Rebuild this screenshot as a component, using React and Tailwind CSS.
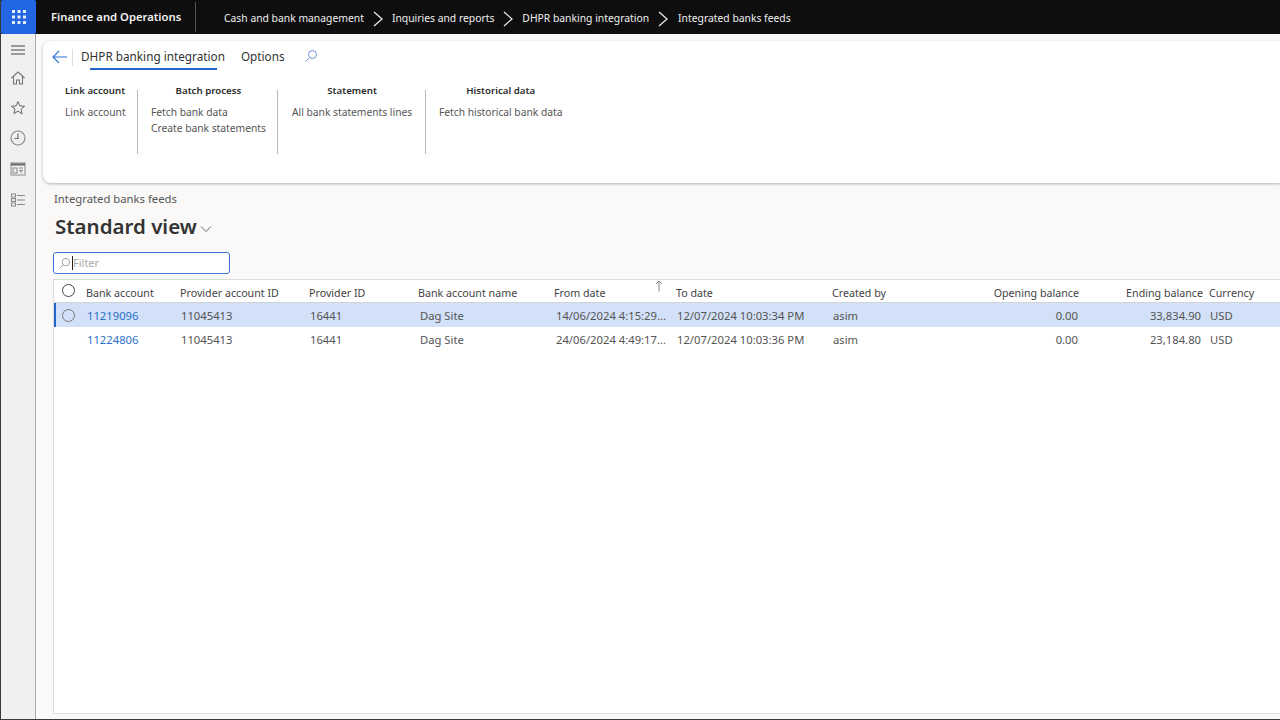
import React from "react";

const crumbs = ["Cash and bank management", "Inquiries and reports", "DHPR banking integration", "Integrated banks feeds"];
const cols = "grid-cols-[32px_94px_129px_109px_136px_122px_156px_120px_127px_124px_77px]";
const rows = [
  { sel: true, acc: "11219096", from: "14/06/2024 4:15:29...", to: "12/07/2024 10:03:34 PM", end: "33,834.90" },
  { sel: false, acc: "11224806", from: "24/06/2024 4:49:17...", to: "12/07/2024 10:03:36 PM", end: "23,184.80" },
];

function Chevron() {
  return (
    <svg width="12" height="16" viewBox="0 0 12 16" fill="none" stroke="#e8e8e8" strokeWidth="1.3" className="shrink-0">
      <path d="M2 1l8 7-8 7" />
    </svg>
  );
}

function RibbonGroup({ title, items, w, center, last, titleSize }) {
  return (
    <div className={`flex justify-between ${w}`}>
      <div className="w-fit flex flex-col">
        <div className={`${titleSize || "text-[10px]"} leading-[14px] font-semibold text-[#2b2b2b] whitespace-nowrap ${center ? "text-center" : ""}`}>{title}</div>
        <div className="mt-[7px] flex flex-col gap-[2px]">
          {items.map((t) => (
            <div key={t} className="text-[10.25px] leading-[14px] text-[#555] whitespace-nowrap">{t}</div>
          ))}
        </div>
      </div>
      {last ? null : <div className="w-px h-[64px] mt-[6px] bg-[#b9b9b9] shrink-0" />}
    </div>
  );
}

function Radio({ dim }) {
  return <div className={`w-[13px] h-[13px] rounded-full border ${dim ? "border-[#777] border-[1.5px]" : "border-[#444]"}`} />;
}

export default function App() {
  return (
    <div className="w-[1280px] h-[720px] overflow-hidden flex flex-col bg-[#faf9f8] border-l border-b border-[#3a3a3a] font-['Noto_Sans','Open_Sans',sans-serif]">
      <header className="h-[34px] shrink-0 bg-[#0e0e0e] flex items-center">
        <div className="w-[35px] h-[34px] bg-[#2266e3] rounded-[2px] flex items-center justify-center">
          <svg width="16" height="16" viewBox="0 0 16 16" fill="#e8eefc">
            {[1, 6.5, 12].flatMap((y) => [1, 6.5, 12].map((x) => <rect key={x + "-" + y} x={x} y={y} width="3" height="3" />))}
          </svg>
        </div>
        <div className="ml-[15px] w-[144px] text-[11.25px] font-semibold text-[#f2f2f2] whitespace-nowrap">Finance and Operations</div>
        <div className="w-px h-[30px] bg-[#555]" />
        <div className="ml-[28px] mt-[3px] flex items-center text-[10.35px] text-[#eeeeee] whitespace-nowrap">
          <span>{crumbs[0]}</span>
          <span className="mx-[8px]"><Chevron /></span>
          <span>{crumbs[1]}</span>
          <span className="mx-[8px]"><Chevron /></span>
          <span>{crumbs[2]}</span>
          <span className="mx-[8px]"><Chevron /></span>
          <span className="pl-[1px]">{crumbs[3]}</span>
        </div>
      </header>

      <div className="flex flex-1 min-h-0">
        <aside className="w-[35px] shrink-0 bg-[#f1f0ef] border-r border-[#a8a8a8] flex flex-col items-center pt-[8px] gap-[10px]">
          <svg width="16" height="16" viewBox="0 0 16 16" fill="none" stroke="#444" strokeWidth="1.1"><path d="M1 4h14M1 8h14M1 12h14" /></svg>
          <svg className="mt-[2px]" width="16" height="16" viewBox="0 0 16 16" fill="none" stroke="#777" strokeWidth="1.1"><path d="M1.5 8L8 2l6.500 6M3.500 6.500V14h3v-4h3v4h3V6.500" /></svg>
          <svg className="mt-[4px]" width="16" height="16" viewBox="0 0 16 16" fill="none" stroke="#666" strokeWidth="1"><path d="M8 1.500l1.900 4.400 4.700.4-3.600 3.100 1.100 4.700L8 11.100l-4.100 2.500L5 8.900 1.400 6.300l4.700-.4z" /></svg>
          <svg className="mt-[4px]" width="16" height="16" viewBox="0 0 16 16" fill="none" stroke="#888" strokeWidth="1.1"><circle cx="8" cy="8" r="7" /><path d="M8 3.500V8.500H4.500" stroke="#666" /></svg>
          <svg className="mt-[5px]" width="16" height="16" viewBox="0 0 16 16" fill="none" stroke="#888" strokeWidth="1"><rect x="1" y="2" width="14" height="12" /><path d="M1 3.500h14" strokeWidth="2" stroke="#666" /><rect x="3" y="7" width="4" height="5" /><path d="M9 7h4M9 9.500h4M11 9.500V12" /></svg>
          <svg className="mt-[5px]" width="16" height="16" viewBox="0 0 16 16" fill="none" stroke="#888" strokeWidth="1"><rect x="1.500" y="2" width="4" height="3" /><rect x="1.500" y="6.500" width="4" height="3" /><rect x="1.500" y="11" width="4" height="3" /><path d="M7 3.500h8M7 8h8M7 12.500h8" /></svg>
        </aside>

        <main className="flex-1 min-w-0 pl-[7px] pt-[7px] flex flex-col">
          <section className="h-[142px] shrink-0 bg-white rounded-l-[8px] shadow-[0_1px_3px_rgba(0,0,0,0.28)] pt-[3px]">
            <div className="flex items-center h-[26px] pl-[9px]">
              <svg width="16" height="14" viewBox="0 0 16 14" fill="none" stroke="#2f6fd6" strokeWidth="1.100"><path d="M15 7H1M7 1L1 7l6 6" /></svg>
              <div className="ml-[4px] w-px h-[17px] bg-[#dddddd]" />
              <div className="relative ml-[8px] text-[11.75px] text-[#333] whitespace-nowrap">
                DHPR banking integration
                <div className="absolute left-[9px] right-[8px] -bottom-[4px] h-[2px] bg-[#2266c8]" />
              </div>
              <div className="ml-[16px] text-[11.75px] text-[#333]">Options</div>
              <svg className="ml-[19px] -mt-[3px]" width="14" height="14" viewBox="0 0 14 14" fill="none" stroke="#6f94e0" strokeWidth="1"><circle cx="8.500" cy="5.500" r="4" /><path d="M5.500 8.500L1.500 12.500" /></svg>
            </div>
            <div className="flex mt-[14px] pl-[22px]">
              <RibbonGroup title="Link account" items={["Link account"]} w="w-[73px]" titleSize="text-[9.7px]" />
              <div className="pl-[13px]"><RibbonGroup title="Batch process" items={["Fetch bank data", "Create bank statements"]} w="w-[127px]" center titleSize="text-[9.7px]" /></div>
              <div className="pl-[14px]"><RibbonGroup title="Statement" items={["All bank statements lines"]} w="w-[134px]" center titleSize="text-[9.7px]" /></div>
              <div className="pl-[13px]"><RibbonGroup title="Historical data" items={["Fetch historical bank data"]} w="w-[126px]" center last titleSize="text-[9.7px]" /></div>
            </div>
          </section>

          <div className="pl-[11px] mt-[9px] text-[11.3px] leading-[14px] text-[#555]">Integrated banks feeds</div>
          <div className="pl-[12px] mt-[5px] flex items-center">
            <span className="text-[20.5px] leading-[30px] font-semibold text-[#333]">Standard view</span>
            <svg className="ml-[3px] mt-[5px]" width="12" height="8" viewBox="0 0 12 8" fill="none" stroke="#666" strokeWidth="1"><path d="M1 1.500l5 5 5-5" /></svg>
          </div>
          <div className="ml-[10px] mt-[11px] w-[177px] h-[22px] shrink-0 bg-white border border-[#3f77d0] rounded-[3px] flex items-center pl-[4px]">
            <svg width="13" height="13" viewBox="0 0 14 14" fill="none" stroke="#999" strokeWidth="1"><circle cx="8.500" cy="5.500" r="4" /><path d="M5.500 8.500L1.500 12.500" /></svg>
            <div className="ml-[1px] w-px h-[14px] bg-[#222]" />
            <span className="text-[11px] text-[#aaa] pt-[1px]">Filter</span>
          </div>

          <section className="ml-[10px] mt-[5px] flex-1 min-h-0 bg-white border-t border-l border-b border-[#dcdcdc] overflow-hidden">
            <div className={`grid ${cols} h-[23px] items-center border-b border-[#d4d4d4] text-[10.7px] text-[#444] whitespace-nowrap pt-[5px]`}>
              <div className="flex justify-center -mt-[6px] pr-[4px]"><Radio /></div>
              <div>Bank account</div>
              <div>Provider account ID</div>
              <div>Provider ID</div>
              <div>Bank account name</div>
              <div className="relative">
                From date
                <svg className="absolute left-[101px] -top-[5px]" width="8" height="12" viewBox="0 0 8 12" fill="none" stroke="#777" strokeWidth="0.900"><path d="M4 11.500V1M1 4l3-3 3 3" /></svg>
              </div>
              <div>To date</div>
              <div>Created by</div>
              <div className="text-right">Opening balance</div>
              <div className="text-right">Ending balance</div>
              <div className="pl-[6px]">Currency</div>
            </div>
            {rows.map((r) => (
              <div key={r.acc} className={`grid ${cols} h-[24px] items-center text-[11.25px] text-[#555] whitespace-nowrap ${r.sel ? "bg-[#d3e1f8]" : ""}`}>
                <div className={`flex justify-center h-full items-center pr-[6px] ${r.sel ? "border-l-2 border-[#2266c8]" : ""}`}>{r.sel ? <Radio dim /> : null}</div>
                <div className="pl-[1px] pt-[2px] text-[#2b70c9]">{r.acc}</div>
                <div className="pl-[1px] pt-[2px]">11045413</div>
                <div className="pl-[1px] pt-[2px]">16441</div>
                <div className="pl-[2px] pt-[2px]">Dag Site</div>
                <div className="pl-[2px] pt-[2px]">{r.from}</div>
                <div className="pl-[1px] pt-[2px]">{r.to}</div>
                <div className="pl-[1px] pt-[2px]">asim</div>
                <div className="text-right pt-[2px] pr-[1px]">0.00</div>
                <div className="text-right pt-[2px] pr-[2px]">{r.end}</div>
                <div className="pl-[7px] pt-[2px]">USD</div>
              </div>
            ))}
          </section>
          <div className="h-[5px] shrink-0" />
        </main>
      </div>
    </div>
  );
}
